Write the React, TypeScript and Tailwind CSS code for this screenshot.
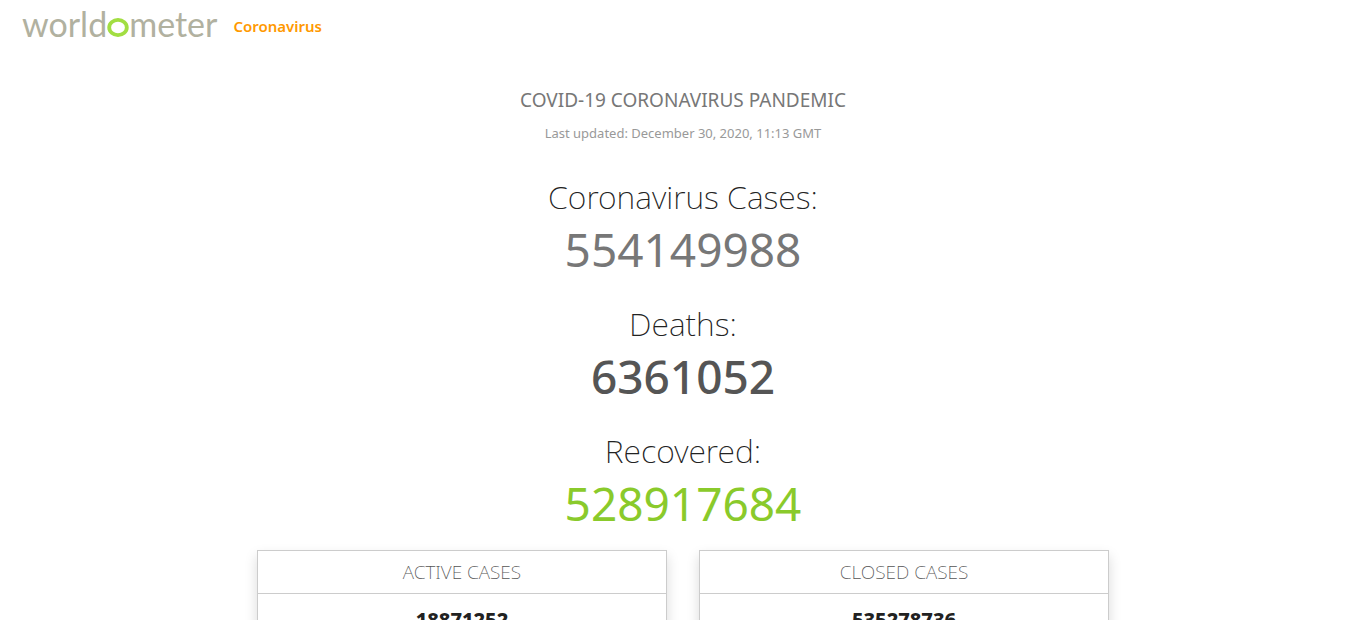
import React from "react";

type Stat = { label: string; value: string; tone: string };

const stats: Stat[] = [
  { label: "Coronavirus Cases:", value: "554149988", tone: "text-[#777777] font-normal" },
  { label: "Deaths:", value: "6361052", tone: "text-[#555555] font-medium" },
  { label: "Recovered:", value: "528917684", tone: "text-[#8aca2b] font-normal" },
];

const panels = [
  { title: "ACTIVE CASES", value: "18871252" },
  { title: "CLOSED CASES", value: "535278736" },
];

function Header() {
  return (
    <header className="flex h-[52px] items-center gap-4 pl-[22px]">
      <a
        href="#"
        aria-label="worldometer"
        className="flex items-baseline pb-1 font-['Lato','Noto_Sans',sans-serif] text-[34px] leading-[48px] text-[#b1b1a0]"
      >
        world
        <svg width="22" height="19" viewBox="0 0 22 19" aria-hidden="true">
          <ellipse cx="11" cy="9.5" rx="8.8" ry="7.6" fill="none" stroke="#a2de42" strokeWidth="3.8" />
        </svg>
        meter
      </a>
      <a href="#coronavirus" className="text-[15px] font-semibold leading-6 text-[#ff9900]">
        Coronavirus
      </a>
    </header>
  );
}

export default function App() {
  return (
    <div className="min-h-screen bg-white font-['Noto_Sans','Open_Sans',sans-serif]">
      <Header />
      <main className="flex flex-col items-center px-4 pb-10 pt-[34px] text-center">
        <h1 className="text-[19px] leading-7 text-[#777777]">COVID-19 CORONAVIRUS PANDEMIC</h1>
        <p className="mt-[7px] text-[13px] leading-6 text-[#999999]">
          Last updated: December 30, 2020, 11:13 GMT
        </p>
        {stats.map((s) => (
          <section key={s.label} className="mt-[27px] first-of-type:mt-8">
            <h2 className="text-[32px] font-extralight leading-10 text-[#222222]">{s.label}</h2>
            <p className={`-mb-0.5 pt-0.5 text-[46px] leading-[60px] ${s.tone}`}>{s.value}</p>
          </section>
        ))}
        <div className="mt-[19px] grid w-full max-w-[852px] grid-cols-2 gap-8">
          {panels.map((p) => (
            <section
              key={p.title}
              className="border border-[#cccccc] pb-40 shadow-[0_6px_12px_rgba(0,0,0,0.15)]"
            >
              <h3 className="border-b border-[#cccccc] text-[19px] font-extralight leading-[42px] text-[#555555]">
                {p.title}
              </h3>
              <p className="pt-[10px] text-[20px] font-extrabold leading-8 text-[#222222]">{p.value}</p>
            </section>
          ))}
        </div>
      </main>
    </div>
  );
}
